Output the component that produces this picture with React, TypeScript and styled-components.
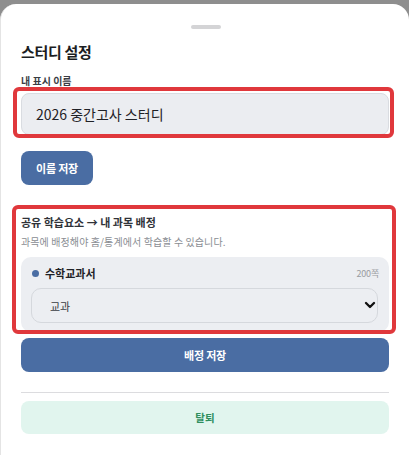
import React from "react";
import styled, { createGlobalStyle } from "styled-components";
import { ChevronDown } from "lucide-react";

const Global = createGlobalStyle`
  html, body { margin: 0; padding: 0; background: #8e8e8e; }
  body { font-family: "Noto Sans CJK KR", "Noto Sans", sans-serif; }
  * { box-sizing: border-box; }
`;

const Sheet = styled.div`
  margin-top: 4px;
  width: 409px;
  min-height: 451px;
  background: #ffffff;
  border-left: 1px solid #e4e4e4;
  border-radius: 16px 16px 0 0;
  padding: 21px 20px 20px 20px;
  display: flex;
  flex-direction: column;
`;

const Handle = styled.div`
  align-self: center;
  width: 30px;
  height: 4px;
  border-radius: 2px;
  background: #d4d4d6;
  margin-left: 2px;
`;

const Title = styled.h1`
  margin: 12px 0 0 0;
  font-size: 15px;
  line-height: 22px;
  font-weight: 700;
  letter-spacing: -0.3px;
  color: #1b1d22;
`;

const Label = styled.div`
  margin-top: 11px;
  font-size: 10px;
  line-height: 14px;
  font-weight: 600;
  color: #3a3d44;
  letter-spacing: 0;
`;

const Highlight = styled.div<{ $t: number; $l: number; $r: number; $b: number }>`
  position: relative;
  &::after {
    content: "";
    position: absolute;
    top: ${(p) => p.$t}px;
    left: ${(p) => p.$l}px;
    right: ${(p) => p.$r}px;
    bottom: ${(p) => p.$b}px;
    border: 4px solid #e0383c;
    border-radius: 6px;
    pointer-events: none;
    z-index: 2;
  }
`;

const NameInput = styled.input`
  display: block;
  width: 100%;
  height: 42px;
  margin: 0;
  padding: 0 0 0 14px;
  background: #ebedf1;
  border: 1px solid #d9dce1;
  border-radius: 8px;
  font-family: inherit;
  font-size: 14px;
  letter-spacing: 0;
  color: #1f2126;
  outline: none;
`;

const PrimaryButton = styled.button<{ $full?: boolean }>`
  display: flex;
  align-items: center;
  justify-content: center;
  height: 34px;
  width: ${(p) => (p.$full ? "100%" : "72px")};
  align-self: ${(p) => (p.$full ? "stretch" : "flex-start")};
  border: none;
  border-radius: 8px;
  background: #4a6da3;
  color: #ffffff;
  font-family: inherit;
  font-size: 11px;
  font-weight: 700;
  letter-spacing: -0.2px;
  padding: 0;
`;

const SectionTitle = styled.div`
  font-size: 11px;
  line-height: 17px;
  font-weight: 700;
  letter-spacing: 0;
  color: #2f3238;
`;

const SectionSub = styled.div`
  margin-top: 3px;
  font-size: 10px;
  line-height: 15px;
  letter-spacing: 0.1px;
  color: #8a8d93;
`;

const Card = styled.div`
  margin-top: 8px;
  background: #eceef2;
  border-radius: 10px;
  padding: 7px 10px 9px 10px;
  display: flex;
  flex-direction: column;
  gap: 6px;
`;

const CardHeader = styled.div`
  display: flex;
  align-items: center;
  height: 18px;
  padding-left: 1px;
`;

const Dot = styled.span`
  width: 7px;
  height: 7px;
  border-radius: 50%;
  background: #4a6da3;
  margin-right: 6px;
  flex: none;
`;

const ItemName = styled.span`
  font-size: 11px;
  font-weight: 700;
  letter-spacing: 0;
  color: #1f2126;
`;

const Pages = styled.span`
  margin-left: auto;
  font-size: 9px;
  color: #9a9ca1;
  letter-spacing: -0.2px;
`;

const SelectWrap = styled.div`
  position: relative;
  margin-right: 1px;
`;

const Select = styled.select`
  display: block;
  width: 100%;
  height: 35px;
  appearance: none;
  -webkit-appearance: none;
  background: #eceef2;
  border: 1px solid #d5d8dd;
  border-radius: 10px;
  padding: 0 0 0 18px;
  font-family: inherit;
  font-size: 11px;
  color: #3a3d44;
  outline: none;
`;

const Chevron = styled(ChevronDown)`
  position: absolute;
  right: 0;
  top: 9px;
  color: #111;
  pointer-events: none;
`;

const Divider = styled.hr`
  margin: 20px 0 8px 0;
  border: none;
  border-top: 1px solid #dcdcdf;
  height: 0;
`;

const LeaveButton = styled.button`
  height: 33px;
  width: 100%;
  border: none;
  border-radius: 8px;
  background: #e1f5ee;
  color: #2f8f5f;
  font-family: inherit;
  font-size: 10.5px;
  font-weight: 700;
  padding: 0;
`;

export default function App() {
  return (
    <>
      <Global />
      <Sheet>
        <Handle />
        <Title>스터디 설정</Title>
        <Label>내 표시 이름</Label>
        <Highlight $t={-6} $l={-8} $r={-5} $b={-3} style={{ marginTop: 5 }}>
          <NameInput defaultValue="2026 중간고사 스터디" />
        </Highlight>
        <PrimaryButton style={{ marginTop: 16 }}>이름 저장</PrimaryButton>
        <Highlight $t={-9} $l={-9} $r={-7} $b={-2} style={{ marginTop: 29 }}>
          <SectionTitle>공유 학습요소 → 내 과목 배정</SectionTitle>
          <SectionSub>과목에 배정해야 홈/통계에서 학습할 수 있습니다.</SectionSub>
          <Card>
            <CardHeader>
              <Dot />
              <ItemName>수학교과서</ItemName>
              <Pages>200쪽</Pages>
            </CardHeader>
            <SelectWrap>
              <Select defaultValue="교과">
                <option value="교과">교과</option>
              </Select>
              <Chevron size={16} strokeWidth={3.5} />
            </SelectWrap>
          </Card>
        </Highlight>
        <PrimaryButton $full style={{ marginTop: 6 }}>배정 저장</PrimaryButton>
        <Divider />
        <LeaveButton>탈퇴</LeaveButton>
      </Sheet>
    </>
  );
}
